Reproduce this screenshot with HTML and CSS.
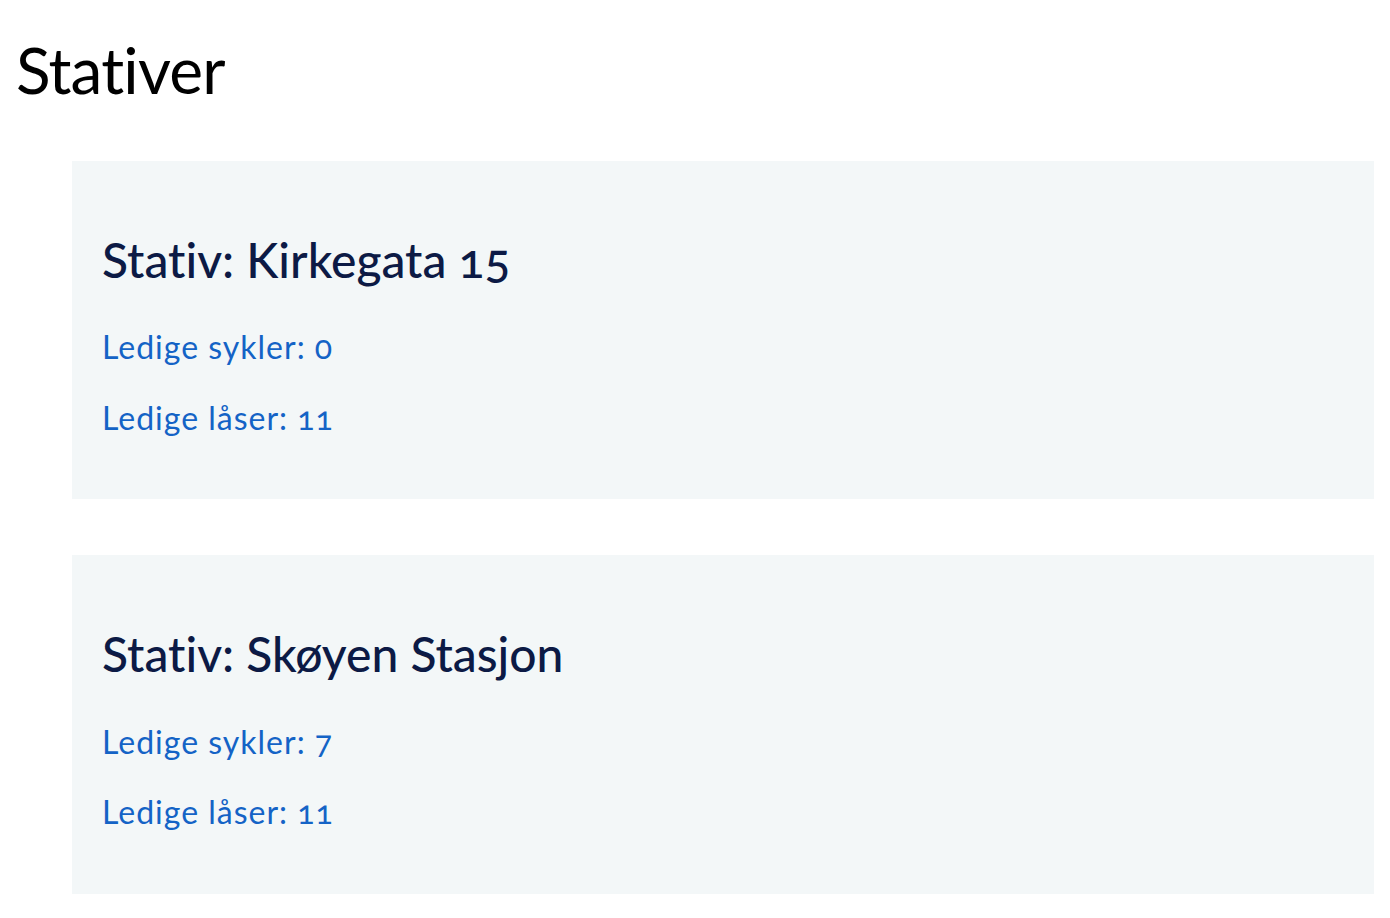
FILE: index.html
```html
<!DOCTYPE html>
<html lang="no">
<head>
<meta charset="utf-8">
<title>Stativer</title>
<link rel="stylesheet" href="styles.css">
</head>
<body>
<h1 class="page-title">Stativer</h1>
<div class="stand-list">
  <section class="stand-card">
    <h2 class="stand-name">Stativ: Kirkegata 15</h2>
    <p class="stand-stat">Ledige sykler: 0</p>
    <p class="stand-stat">Ledige låser: 11</p>
  </section>
  <section class="stand-card">
    <h2 class="stand-name">Stativ: Skøyen Stasjon</h2>
    <p class="stand-stat">Ledige sykler: 7</p>
    <p class="stand-stat">Ledige låser: 11</p>
  </section>
</div>
</body>
</html>
```

FILE: styles.css
```css
html {
  scrollbar-width: none;
  overflow-x: hidden;
}
body {
  margin: 16px;
  font-family: Lato, "Open Sans", "Liberation Sans", sans-serif;
  font-variant-numeric: oldstyle-nums;
  font-variant-ligatures: none;
  background: #ffffff;
}
.page-title {
  font-size: 64px;
  font-weight: 400;
  color: #000000;
  margin: 16px 0 52px 0;
  line-height: 1.2;
  letter-spacing: -0.8px;
}
.stand-list {
  display: flex;
  flex-direction: column;
  gap: 56px;
  margin-left: 56px;
  width: calc(100vw - 72px);
}
.stand-card {
  background: #f3f7f8;
  padding: 30px;
}
.stand-name {
  font-size: 48px;
  font-weight: 500;
  color: #0c1a45;
  margin: 40px 0;
  line-height: 1.2;
}
.stand-stat {
  font-size: 32px;
  font-weight: 400;
  color: #1463c6;
  margin: 32px 0;
  line-height: 1.2;
  letter-spacing: 1px;
}
```
